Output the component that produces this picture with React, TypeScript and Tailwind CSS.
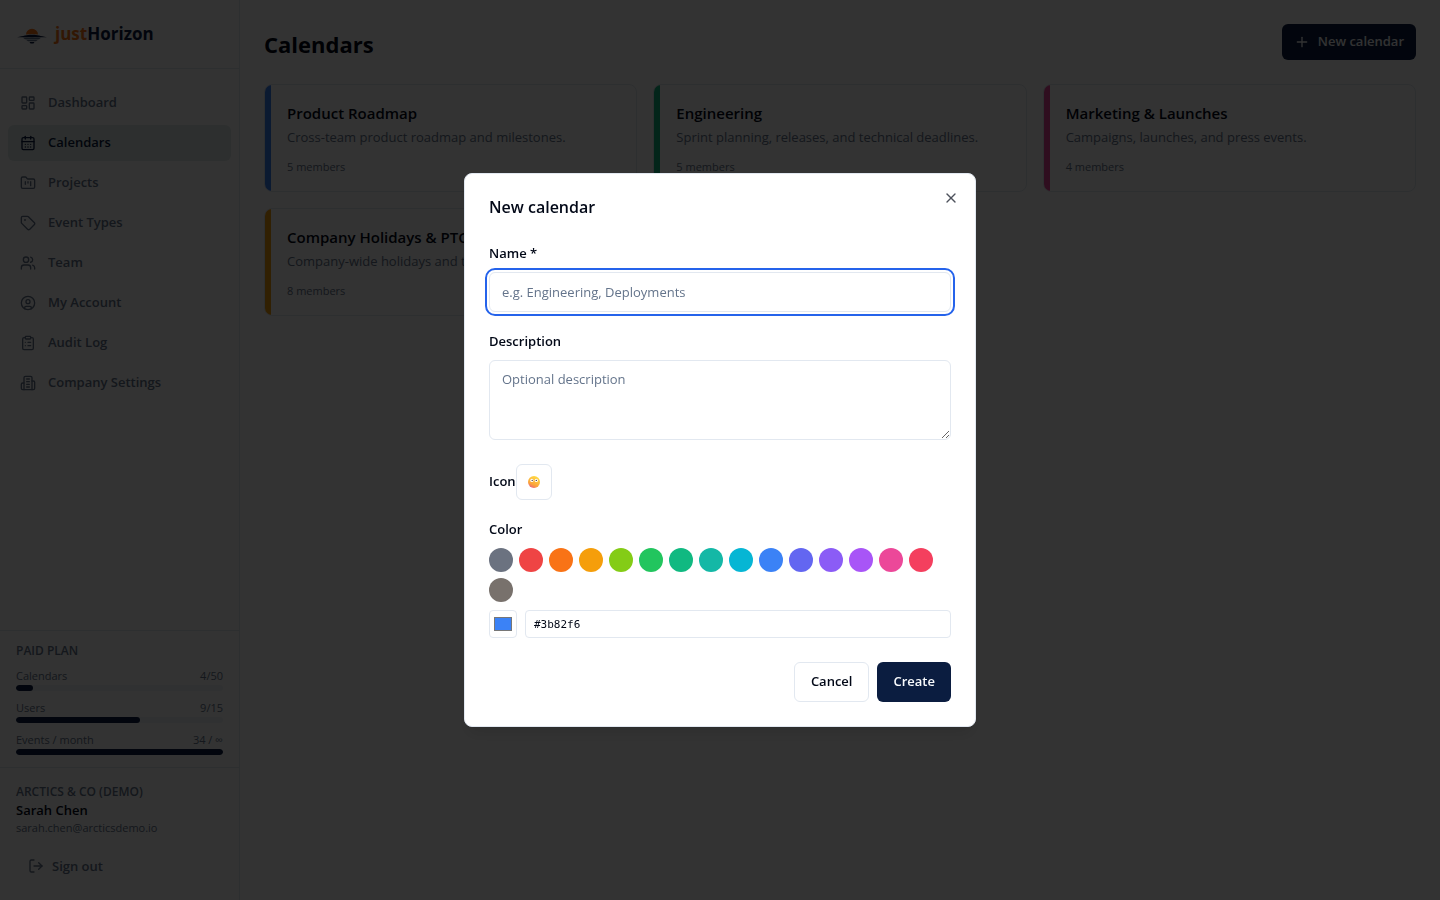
import { useState } from "react";
import type { ReactNode } from "react";
import {
  CalendarDays,
  CircleUser,
  ClipboardList,
  FolderKanban,
  LayoutDashboard,
  LogOut,
  Plus,
  Tag,
  Users,
  X,
} from "lucide-react";

function Building({ size }: { size: number }) {
  return (
    <svg
      width={size}
      height={size}
      viewBox="0 0 24 24"
      fill="none"
      stroke="currentColor"
      strokeWidth="2"
      strokeLinecap="round"
      strokeLinejoin="round"
      aria-hidden="true"
    >
      <path d="M6 22V4a2 2 0 0 1 2-2h8a2 2 0 0 1 2 2v18Z" />
      <path d="M6 12H4a2 2 0 0 0-2 2v6a2 2 0 0 0 2 2h2" />
      <path d="M18 9h2a2 2 0 0 1 2 2v9a2 2 0 0 1-2 2h-2" />
      <path d="M10 6h4M10 10h4M10 14h4M10 18h4" />
    </svg>
  );
}

const NAV = [
  { label: "Dashboard", icon: LayoutDashboard },
  { label: "Calendars", icon: CalendarDays, active: true },
  { label: "Projects", icon: FolderKanban },
  { label: "Event Types", icon: Tag },
  { label: "Team", icon: Users },
  { label: "My Account", icon: CircleUser },
  { label: "Audit Log", icon: ClipboardList },
  { label: "Company Settings", icon: Building },
];

const USAGE = [
  { label: "Calendars", value: "4/50", percent: 8 },
  { label: "Users", value: "9/15", percent: 60 },
  { label: "Events / month", value: "34 / ∞", percent: 100 },
];

const CALENDARS = [
  { name: "Product Roadmap", text: "Cross-team product roadmap and milestones.", members: 5, color: "bg-[#3b82f6]" },
  { name: "Engineering", text: "Sprint planning, releases, and technical deadlines.", members: 5, color: "bg-[#10b981]" },
  { name: "Marketing & Launches", text: "Campaigns, launches, and press events.", members: 4, color: "bg-[#ec4899]" },
  { name: "Company Holidays & PTO", text: "Company-wide holidays and time off.", members: 8, color: "bg-[#f59e0b]" },
];

const SWATCHES = [
  "#6b7280", "#ef4444", "#f97316", "#f59e0b", "#84cc16", "#22c55e", "#10b981", "#14b8a6",
  "#06b6d4", "#3b82f6", "#6366f1", "#8b5cf6", "#a855f7", "#ec4899", "#f43f5e", "#78716c",
];

function Logo() {
  return (
    <svg className="h-8 w-8" viewBox="0 0 32 32" aria-hidden="true">
      <path d="M10 16.4a6 5.6 0 0 1 12 0q-6-1-12 0z" fill="#f97316" />
      <path d="M1 19.2C8 18.2 10 16.800 16 16.800s8 1.400 15 2.400C25 19.500 21 19 16 19S7 19.500 1 19.200z" fill="#0b1d40" />
      <path d="M7 19.800q9-1 18 0l-2 1.400H9z" fill="#64748b" />
      <path d="M10 21.800h12l-2 1.500h-8z" fill="#64748b" />
      <path d="M13.500 24h5l-1 1.600h-3z" fill="#0b1d40" />
    </svg>
  );
}

function Face() {
  return (
    <svg className="h-3 w-3" viewBox="0 0 12 12" aria-hidden="true">
      <defs>
        <linearGradient id="face" x1="0.75" y1="0" x2="0.25" y2="1">
          <stop offset="0" stopColor="#ffdf45" />
          <stop offset="0.7" stopColor="#fba43a" />
          <stop offset="1" stopColor="#ea5f80" />
        </linearGradient>
      </defs>
      <circle cx="6" cy="6" r="6" fill="url(#face)" />
      <circle cx="3.900" cy="4.400" r="1.600" fill="#fff" />
      <circle cx="8.300" cy="4.400" r="1.600" fill="#fff" />
      <circle cx="4.200" cy="4.400" r="0.700" fill="#4b3b4a" />
      <circle cx="8.300" cy="4.400" r="0.700" fill="#4b3b4a" />
    </svg>
  );
}

function Sidebar() {
  return (
    <aside className="flex w-60 shrink-0 flex-col border-r border-[#e2e8f0] bg-white">
      <div className="border-b border-[#e2e8f0] px-4 py-[18px]">
        <a href="#" className="flex h-8 items-center gap-[7px] text-[17px] font-bold text-[#0b1d40]">
          <Logo />
          <span>
            <span className="text-[#f97316]">just</span>Horizon
          </span>
        </a>
      </div>
      <nav className="flex flex-1 flex-col gap-1 px-2 py-4">
        {NAV.map(({ label, icon: Icon, active }) => (
          <a
            key={label}
            href="#"
            aria-current={active ? "page" : undefined}
            className={
              active
                ? "flex h-9 items-center gap-3 rounded-md bg-[#e0ebe8] px-3 text-[13px] font-semibold text-[#0b1d40]"
                : "flex h-9 items-center gap-3 rounded-md px-3 text-[13px] font-semibold text-[#64748b]"
            }
          >
            <Icon size={16} />
            {label}
          </a>
        ))}
      </nav>
      <section className="border-t border-[#e2e8f0] px-4 py-3 text-[11px]/4 text-[#64748b]">
        <h2 className="mb-2 text-xs font-semibold">PAID PLAN</h2>
        <div className="flex flex-col gap-2">
          {USAGE.map((u) => (
            <div key={u.label}>
              <div className="flex justify-between leading-[18px]">
                <span>{u.label}</span>
                <span>{u.value}</span>
              </div>
              <div className="h-1.5 overflow-hidden rounded-full bg-[#f1f5f9]">
                <div className="h-full rounded-full bg-[#0b1d40]" style={{ width: `${u.percent}%` }} />
              </div>
            </div>
          ))}
        </div>
      </section>
      <section className="border-t border-[#e2e8f0] p-4 text-[11px]/4 text-[#64748b]">
        <p className="text-xs font-semibold">ARCTICS &amp; CO (DEMO)</p>
        <p className="text-[13px]/5 font-semibold text-[#020817]">Sarah Chen</p>
        <p>sarah.chen@arcticsdemo.io</p>
        <button type="button" className="mt-3 flex h-9 items-center gap-2 px-3 text-[13px] font-semibold">
          <LogOut size={16} />
          Sign out
        </button>
      </section>
    </aside>
  );
}

function Field({ id, label, children }: { id: string; label: string; children: ReactNode }) {
  return (
    <div>
      <label htmlFor={id} className="mb-1.5 block text-[13px]/[26px] font-semibold">
        {label}
      </label>
      <div className="flex flex-col gap-2">{children}</div>
    </div>
  );
}

function NewCalendarDialog() {
  const [color, setColor] = useState("#3b82f6");
  return (
    <div className="fixed inset-0 flex items-center justify-center bg-black/80">
      <div
        role="dialog"
        aria-modal="true"
        aria-labelledby="dialog-title"
        className="relative w-full max-w-lg rounded-lg border border-[#e2e8f0] bg-white p-6 shadow-lg"
      >
        <h2 id="dialog-title" className="text-base/[18px] font-semibold">
          New calendar
        </h2>
        <button type="button" aria-label="Close" className="absolute top-4 right-4 opacity-70">
          <X size={16} />
        </button>
        <form className="mt-6 flex flex-col gap-6" onSubmit={(e) => e.preventDefault()}>
          <div className="flex flex-col gap-4">
            <Field id="name" label="Name *">
              <input
                id="name"
                placeholder="e.g. Engineering, Deployments"
                className="h-10 rounded-md border border-[#e2e8f0] px-3 text-[13px] outline-2 outline-offset-2 outline-[#2563eb] placeholder:text-[#64748b]"
              />
            </Field>
            <Field id="description" label="Description">
              <textarea
                id="description"
                placeholder="Optional description"
                className="h-20 rounded-md border border-[#e2e8f0] px-3 py-2 text-[13px]/5 outline-none placeholder:text-[#64748b]"
              />
            </Field>
          </div>
          <div className="flex flex-col gap-4">
            <div className="flex items-center">
              <label htmlFor="icon" className="text-[13px] font-semibold">
                Icon
              </label>
              <button
                id="icon"
                type="button"
                className="flex h-9 w-9 items-center justify-center rounded-md border border-[#e2e8f0]"
              >
                <Face />
              </button>
            </div>
            <Field id="hex" label="Color">
              <div className="flex flex-wrap gap-1.5">
                {SWATCHES.map((c) => (
                  <button
                    key={c}
                    type="button"
                    aria-label={c}
                    onClick={() => setColor(c)}
                    className="h-6 w-6 rounded-full"
                    style={{ backgroundColor: c }}
                  />
                ))}
              </div>
              <div className="flex gap-2">
                <input
                  type="color"
                  aria-label="Custom color"
                  value={color}
                  onChange={(e) => setColor(e.target.value)}
                  className="h-7 w-7 rounded border border-[#e2e8f0] p-0.5"
                />
                <input
                  id="hex"
                  value={color}
                  onChange={(e) => setColor(e.target.value)}
                  className="h-7 min-w-0 flex-1 rounded border border-[#e2e8f0] px-2 font-['DejaVu_Sans_Mono',monospace] text-[11px] outline-none"
                />
              </div>
            </Field>
          </div>
          <div className="flex justify-end gap-2">
            <button type="button" className="h-10 rounded-md border border-[#e2e8f0] px-4 text-[13px] font-semibold">
              Cancel
            </button>
            <button type="submit" className="h-10 rounded-md bg-[#0b1d40] px-4 text-[13px] font-semibold text-[#f8fafc]">
              Create
            </button>
          </div>
        </form>
      </div>
    </div>
  );
}

export default function App() {
  return (
    <div className="flex min-h-screen bg-white font-['Open_Sans','Noto_Sans',sans-serif] text-[#020817]">
      <Sidebar />
      <main className="min-w-0 flex-1 p-6">
        <header className="flex items-end justify-between">
          <h1 className="text-[22px]/8 font-bold">Calendars</h1>
          <button
            type="button"
            className="flex h-9 items-center gap-2 rounded-md bg-[#0b1d40] px-3 text-[13px] font-semibold text-[#f8fafc]"
          >
            <Plus size={16} />
            New calendar
          </button>
        </header>
        <div className="mt-6 grid grid-cols-3 gap-4">
          {CALENDARS.map((c) => (
            <article key={c.name} className="flex overflow-hidden rounded-lg border border-[#e2e8f0]">
              <div className={`w-1.5 shrink-0 ${c.color}`} />
              <div className="min-w-0 p-4">
                <h3 className="truncate text-[15px]/6 font-semibold">{c.name}</h3>
                <p className="mt-0.5 truncate text-[13px]/5 text-[#64748b]">{c.text}</p>
                <p className="mt-3 text-[11px]/4 text-[#64748b]">{c.members} members</p>
              </div>
            </article>
          ))}
        </div>
      </main>
      <NewCalendarDialog />
    </div>
  );
}
